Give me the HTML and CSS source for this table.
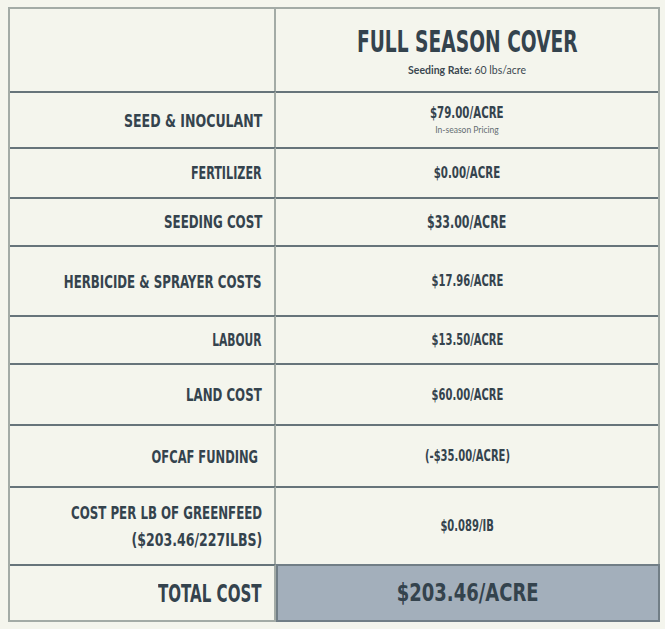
FILE: index.html
```html
<!DOCTYPE html>
<html lang="en">
<head>
<meta charset="utf-8">
<title>Full Season Cover – Cost Breakdown</title>
<link rel="stylesheet" href="styles.css">
</head>
<body>
<div class="sheet">
  <div class="cell head-blank"></div>
  <div class="cell head">
    <h1 class="title"><span class="cond">FULL SEASON COVER</span></h1>
    <p class="rate"><b>Seeding Rate:</b> 60 lbs/acre</p>
  </div>

  <div class="cell lbl lbl-wide"><span class="cond">SEED &amp; INOCULANT</span></div>
  <div class="cell val">
    <span class="cond">$79.00/ACRE</span>
    <span class="note">In-season Pricing</span>
  </div>

  <div class="cell lbl lbl-sm"><span class="cond">FERTILIZER</span></div>
  <div class="cell val"><span class="cond">$0.00/ACRE</span></div>

  <div class="cell lbl lbl-sm lbl-wide"><span class="cond">SEEDING COST</span></div>
  <div class="cell val val-lg"><span class="cond">$33.00/ACRE</span></div>

  <div class="cell lbl"><span class="cond">HERBICIDE &amp; SPRAYER COSTS</span></div>
  <div class="cell val val-sm"><span class="cond">$17.96/ACRE</span></div>

  <div class="cell lbl lbl-xs"><span class="cond">LABOUR</span></div>
  <div class="cell val val-sm"><span class="cond">$13.50/ACRE</span></div>

  <div class="cell lbl"><span class="cond">LAND COST</span></div>
  <div class="cell val val-sm"><span class="cond">$60.00/ACRE</span></div>

  <div class="cell lbl lbl-tight"><span class="cond">OFCAF FUNDING&nbsp;</span></div>
  <div class="cell val val-sm"><span class="cond">(-$35.00/ACRE)</span></div>

  <div class="cell lbl lbl-stack">
    <span class="cond">COST PER LB OF GREENFEED</span>
    <span class="cond cond-wide">($203.46/227ILBS)</span>
  </div>
  <div class="cell val val-sm"><span class="cond">$0.089/IB</span></div>

  <div class="cell lbl lbl-total"><span class="cond">TOTAL COST</span></div>
  <div class="cell val val-total"><span class="cond">$203.46/ACRE</span></div>
</div>
</body>
</html>
```

FILE: styles.css
```css
html, body {
  margin: 0;
  padding: 0;
  background: #f4f5ed;
}

.sheet {
  box-sizing: border-box;
  width: 652px;
  margin: 7px 0 0 8px;
  display: grid;
  grid-template-columns: 266px 1fr;
  grid-template-rows: 82px 56px 50px 48px 70px 48px 61px 62px 78px 56px;
  border: 2px solid #a3aba6;
  color: #34434d;
  font-family: "DejaVu Sans Condensed", "DejaVu Sans", sans-serif;
  font-weight: 700;
}

.cell {
  box-sizing: border-box;
  min-width: 0;
  border-top: 2px solid #66747a;
}

.head-blank,
.head {
  border-top: none;
}

.head-blank,
.lbl {
  border-right: 2px solid #a3aba6;
}

.cond {
  display: inline-block;
  white-space: nowrap;
}

/* header */
.head {
  display: flex;
  flex-direction: column;
  align-items: center;
  justify-content: center;
  padding-top: 1px;
}

.title {
  margin: 0;
  font-size: 30.5px;
  line-height: 31px;
  font-weight: 700;
}

.title .cond {
  transform: scaleX(0.68);
}

.rate {
  margin: 7px 0 0;
  font-family: Lato, "Open Sans", sans-serif;
  font-weight: 400;
  font-size: 10.5px;
  line-height: 12px;
  color: #3b4850;
}

.rate b {
  font-weight: 700;
}

/* labels */
.lbl {
  display: flex;
  align-items: center;
  justify-content: flex-end;
  padding-right: 12px;
  text-align: right;
  font-size: 18.5px;
  line-height: 27px;
}

.lbl .cond {
  transform: scaleX(0.71);
  transform-origin: right center;
}

.lbl-wide .cond,
.lbl .cond-wide {
  transform: scaleX(0.755);
}

.lbl-tight .cond {
  transform: scaleX(0.69);
}

.lbl-stack {
  flex-direction: column;
  align-items: flex-end;
  justify-content: center;
}

.lbl-sm {
  font-size: 17.5px;
}

.lbl-xs {
  font-size: 16.8px;
}

.lbl-total {
  font-size: 25px;
}

.lbl-total .cond {
  transform: scaleX(0.67);
}

/* values */
.val {
  display: flex;
  flex-direction: column;
  align-items: center;
  justify-content: center;
  font-size: 15.4px;
  line-height: 16px;
}

.val .cond {
  transform: scaleX(0.74);
}

.val-lg {
  font-size: 17.5px;
}

.val-lg .cond {
  transform: scaleX(0.7);
}

.val-sm {
  font-size: 15px;
}

.note {
  margin-top: 4px;
  font-family: Lato, "Open Sans", sans-serif;
  font-weight: 400;
  font-size: 8.5px;
  line-height: 10px;
  color: #646d72;
}

.val-total {
  margin: 0 -2px -2px 0;
  border: 2px solid #717e86;
  background: #a3afbb;
  font-size: 25px;
  line-height: 30px;
}

.val-total .cond {
  transform: scaleX(0.8);
}
```
